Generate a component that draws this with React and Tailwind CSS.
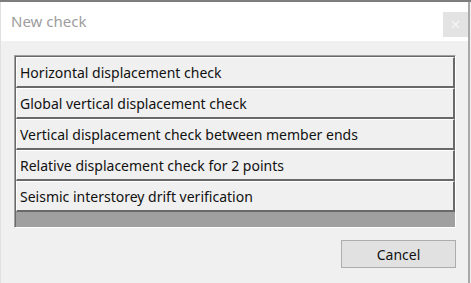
import React from "react";

const checks = [
  "Horizontal displacement check",
  "Global vertical displacement check",
  "Vertical displacement check between member ends",
  "Relative displacement check for 2 points",
  "Seismic interstorey drift verification",
];

// Bouton de liste façon Win32 (relief 3D)
const CheckItem = ({ label }) => (
  <button className="block w-full h-[31px] text-left bg-[#f0f0f0] border-t border-l border-t-white border-l-white border-b-2 border-r-2 border-b-[#696969] border-r-[#696969] pl-[3px] pt-[2px] text-[14px] text-[#111] leading-none">
    {label}
  </button>
);

export default function App() {
  return (
    <div
      className="w-[471px] h-[283px] bg-[#f0f0f0] border-t-2 border-t-[#7d7d7d] flex flex-col"
      style={{ fontFamily: '"Noto Sans", "Open Sans", sans-serif' }}
    >
      <div className="flex flex-1 min-h-0">
        <div className="flex-1 flex flex-col border-l border-l-[#e0e0e0]">
          {/* Barre de titre */}
          <div className="h-[39px] bg-white flex items-center justify-between pl-[10px]">
            <span className="text-[15px] text-[#9d9d9d]">New check</span>
            <div className="w-[25px] h-[25px] bg-[#e3e3e3] flex items-center justify-center mt-[10px] self-start">
              <svg width="9" height="9" viewBox="0 0 9 9">
                <path d="M1 1L8 8M8 1L1 8" stroke="#f6f6f6" strokeWidth="1.3" />
              </svg>
            </div>
          </div>

          {/* Contenu */}
          <div className="flex-1 pt-[14px] pl-[13px] pr-[12px]">
            <div className="border-t border-l border-t-[#a0a0a0] border-l-[#a0a0a0] border-b border-r border-b-white border-r-white">
              <div className="border-t border-l border-t-[#696969] border-l-[#696969] bg-[#a0a0a0] h-[171px]">
                {checks.map((c) => (
                  <CheckItem key={c} label={c} />
                ))}
              </div>
            </div>
            <div className="flex justify-end mt-[12px]">
              <button className="w-[115px] h-[28px] bg-[#e1e1e1] border border-[#adadad] text-[14px] text-[#111]">
                Cancel
              </button>
            </div>
          </div>
        </div>
        <div className="w-[3px] flex">
          <div className="w-[2px] bg-[#a8a8a8]" />
          <div className="w-[1px] bg-[#f0f0f0]" />
        </div>
      </div>
    </div>
  );
}
